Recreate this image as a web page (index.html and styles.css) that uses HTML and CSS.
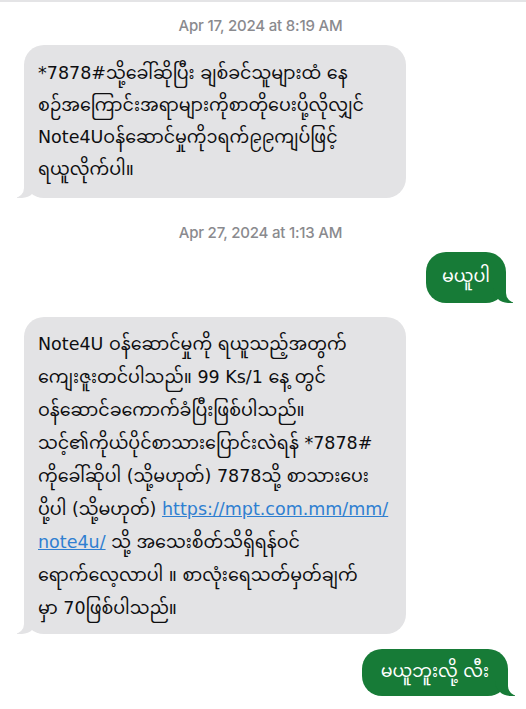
FILE: index.html
```html
<!DOCTYPE html>
<html lang="my">
<head>
<meta charset="utf-8">
<title>Messages</title>
<link rel="stylesheet" href="styles.css">
</head>
<body>
<main class="thread">
  <div class="stamp">Apr 17, 2024 at 8:19 AM</div>
  <div class="row in">
    <div class="bubble gray first">*7878#သို့ခေါ်ဆိုပြီး ချစ်ခင်သူများထံ နေ<br>စဉ်အကြောင်းအရာများကိုစာတိုပေးပို့လိုလျှင်<br>Note4Uဝန်ဆောင်မှုကို၁ရက်၉၉ကျပ်ဖြင့်<br>ရယူလိုက်ပါ။</div>
  </div>
  <div class="stamp second">Apr 27, 2024 at 1:13 AM</div>
  <div class="row out">
    <div class="bubble green one">မယူပါ</div>
  </div>
  <div class="row in">
    <div class="bubble gray long">Note4U ဝန်ဆောင်မှုကို ရယူသည့်အတွက်<br>ကျေးဇူးတင်ပါသည်။ 99 Ks/1 နေ့ တွင်<br>ဝန်ဆောင်ခကောက်ခံပြီးဖြစ်ပါသည်။<br>သင့်၏ကိုယ်ပိုင်စာသားပြောင်းလဲရန် *7878#<br>ကိုခေါ်ဆိုပါ (သို့မဟုတ်) 7878သို့ စာသားပေး<br>ပို့ပါ (သို့မဟုတ်) <a class="link" href="#">https://mpt.com.mm/mm/</a><br><a class="link" href="#">note4u/</a> သို့ အသေးစိတ်သိရှိရန်ဝင်<br>ရောက်လေ့လာပါ ။ စာလုံးရေသတ်မှတ်ချက်<br>မှာ 70ဖြစ်ပါသည်။</div>
  </div>
  <div class="row out last">
    <div class="bubble green two">မယူဘူးလို့ လီး</div>
  </div>
</main>
</body>
</html>
```
FILE: styles.css
```css
* { box-sizing: border-box; }
html, body { margin: 0; padding: 0; background: #ffffff; }
body {
  width: 526px;
  height: 709px;
  overflow: hidden;
  border-top: 2px solid #e4e4e6;
  font-family: "DejaVu Sans", "Noto Sans Myanmar", "Padauk", sans-serif;
  color: #0e0e10;
}
.thread {
  display: flex;
  flex-direction: column;
  padding: 0 20px 0 24px;
}
.stamp {
  text-align: center;
  font-family: "Inter", "Roboto", sans-serif;
  font-size: 15px;
  font-weight: 500;
  color: #8a8a8e;
  line-height: 18px;
  margin-top: 15px;
  margin-bottom: 10px;
  padding-right: 9px;
  letter-spacing: -0.2px;
}
.stamp.second { margin-top: 26px; margin-bottom: 10px; }
.row { display: flex; }
.row.in { justify-content: flex-start; }
.row.out { justify-content: flex-end; }
.bubble {
  position: relative;
  border-radius: 20px;
  font-size: 17.5px;
  white-space: nowrap;
}
.bubble.gray {
  background: #e3e3e5;
  width: 382px;
  padding: 12px 14px 13px 14px;
  line-height: 32px;
}
.bubble.long {
  margin-top: 14px;
  padding: 11px 14px 9px 14px;
  line-height: 33px;
}
.bubble.green {
  background: #177b37;
  color: #ffffff;
  height: 51px;
  display: flex;
  align-items: center;
  padding: 0 16px;
}
.bubble.one { margin-top: 0; }
.bubble.two { margin-top: 15px; height: 47px; margin-right: -2px; padding: 0 19px; }
.link { color: #2f7fd1; text-decoration: underline; }

/* tails */
.bubble::before,
.bubble::after {
  content: "";
  position: absolute;
  bottom: 0;
  height: 20px;
}
.bubble.gray::before {
  left: -7px;
  width: 20px;
  background: #e3e3e5;
  border-bottom-right-radius: 15px;
}
.bubble.gray::after {
  left: -26px;
  width: 26px;
  background: #ffffff;
  border-bottom-right-radius: 10px;
}
.bubble.green::before {
  right: -7px;
  width: 20px;
  background: #177b37;
  border-bottom-left-radius: 15px;
}
.bubble.green::after {
  right: -26px;
  width: 26px;
  background: #ffffff;
  border-bottom-left-radius: 10px;
}
```
